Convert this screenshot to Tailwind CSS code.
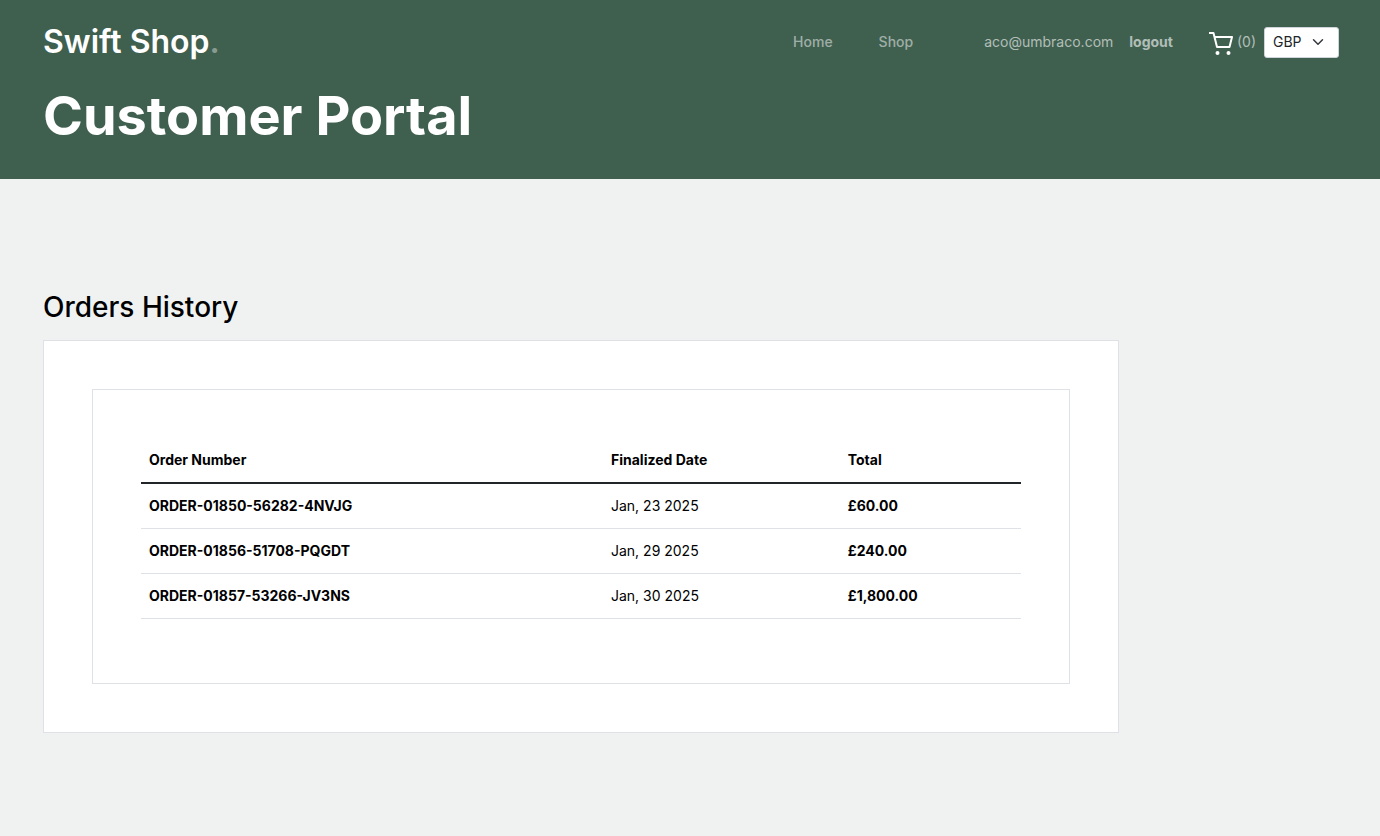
<!DOCTYPE html>
<html lang="en">
<head>
<meta charset="utf-8">
<meta name="viewport" content="width=device-width, initial-scale=1">
<title>Swift Shop – Customer Portal</title>
<script src="https://cdn.jsdelivr.net/npm/@tailwindcss/browser@4"></script>
</head>
<body class="min-h-screen bg-[#eff2f1] font-['Inter',sans-serif] text-sm text-black">
<header class="bg-[#3f5f4f] pt-5 pr-[41px] pb-8 pl-[43px] text-white">
  <nav class="flex h-11 items-center" aria-label="Main">
    <a href="#" class="text-[32px] leading-11 font-semibold">Swift Shop<span class="text-white/40">.</span></a>
    <div class="ml-auto flex items-center text-white/50">
      <a href="#" class="mr-[46px] font-medium">Home</a>
      <a href="#" class="mr-[71px] font-medium">Shop</a>
      <a href="#" class="mr-4 text-white/60">aco@umbraco.com</a>
      <a href="#" class="mr-9 font-bold text-white/60">logout</a>
      <a href="#" class="mr-2 flex items-center gap-1 text-white/60" aria-label="Cart, 0 items">
        <svg class="mt-0.5 size-6 text-white" viewBox="0 0 24 24" fill="none" stroke="currentColor" stroke-width="2" stroke-linejoin="round" aria-hidden="true">
          <path d="M0 2h4.5L8 16h12.5L23 6H5.5"/>
          <circle cx="8.5" cy="22" r="2" fill="currentColor" stroke="none"/>
          <circle cx="19.5" cy="22" r="2" fill="currentColor" stroke="none"/>
        </svg>
        <span>(0)</span>
      </a>
    </div>
    <div class="relative">
      <select aria-label="Currency" class="h-[31px] w-[75px] appearance-none rounded-[3px] border border-[#ced4da] bg-white pl-2 text-sm text-[#212529]">
        <option>GBP</option>
      </select>
      <svg class="pointer-events-none absolute top-[9px] right-[15px] size-3" viewBox="0 0 16 16" fill="none" stroke="#343a40" stroke-width="2" stroke-linecap="round" stroke-linejoin="round" aria-hidden="true"><path d="m2 5 6 6 6-6"/></svg>
    </div>
  </nav>
  <h1 class="mt-5 text-[54px] leading-[63px] font-bold">Customer Portal</h1>
</header>
<main class="pt-[112px] pr-[41px] pb-10 pl-[43px]">
  <h2 class="mb-4 text-[28px] leading-[33px] font-medium">Orders History</h2>
  <section class="max-w-[1076px] border border-[#dee2e6] bg-white p-12">
    <div class="border border-[#dee2e6] px-12 pt-12 pb-16">
      <table class="w-full table-fixed border-collapse text-left leading-7">
        <thead>
          <tr class="border-b-2 border-[#212529]">
            <th class="w-[52.5%] p-2 font-bold">Order Number</th>
            <th class="w-[26.9%] p-2 font-bold">Finalized Date</th>
            <th class="p-2 font-bold">Total</th>
          </tr>
        </thead>
        <tbody>
          <tr class="border-b border-[#dee2e6]"><td class="p-2 font-bold">ORDER-01850-56282-4NVJG</td><td class="p-2">Jan, 23 2025</td><td class="p-2 font-bold">£60.00</td></tr>
          <tr class="border-b border-[#dee2e6]"><td class="p-2 font-bold">ORDER-01856-51708-PQGDT</td><td class="p-2">Jan, 29 2025</td><td class="p-2 font-bold">£240.00</td></tr>
          <tr class="border-b border-[#dee2e6]"><td class="p-2 font-bold">ORDER-01857-53266-JV3NS</td><td class="p-2">Jan, 30 2025</td><td class="p-2 font-bold">£1,800.00</td></tr>
        </tbody>
      </table>
    </div>
  </section>
</main>
</body>
</html>
